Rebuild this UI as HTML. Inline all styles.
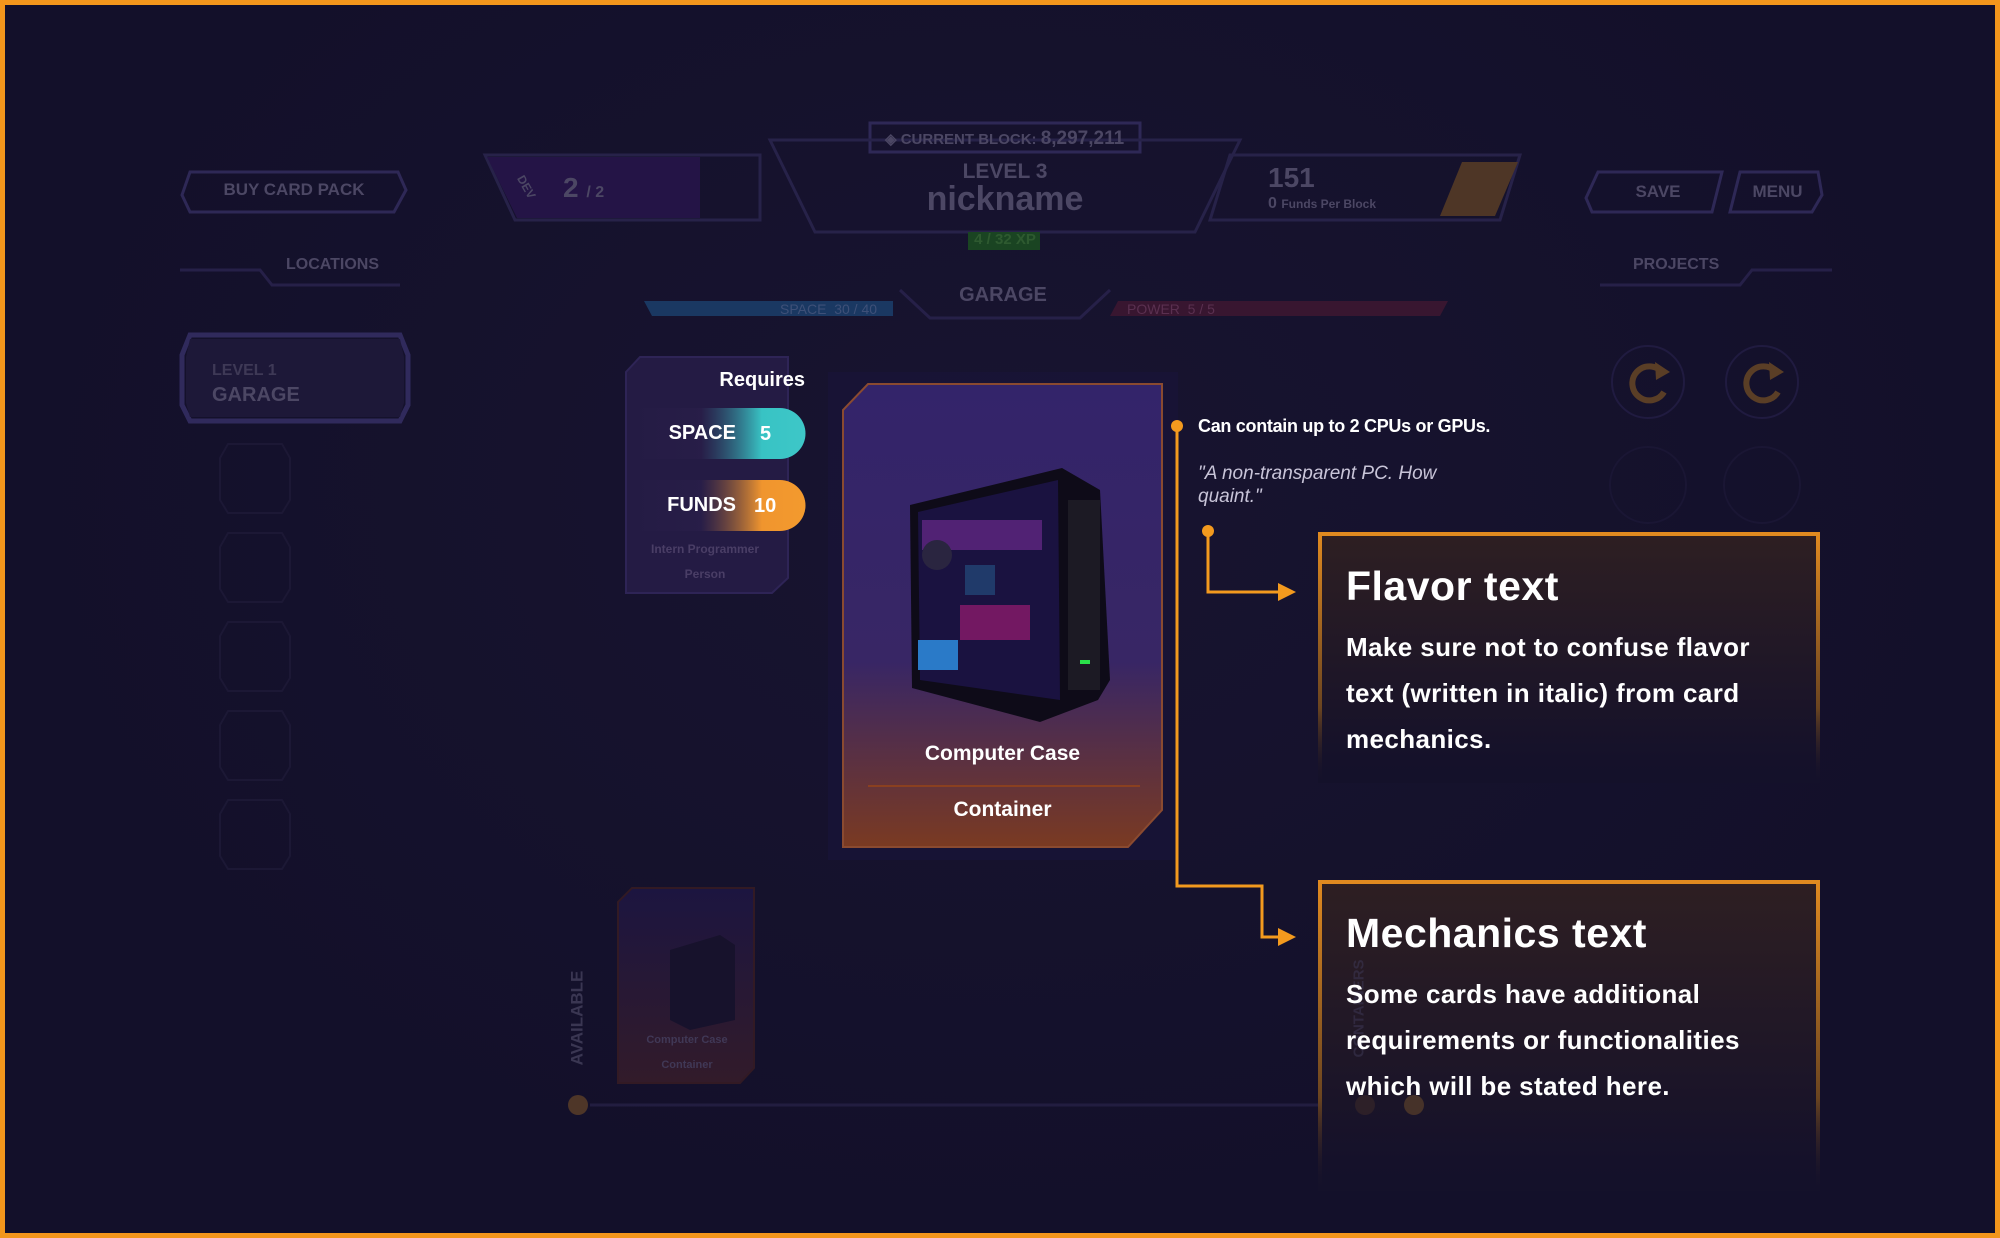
<!DOCTYPE html>
<html><head><meta charset="utf-8"><style>
*{margin:0;padding:0;box-sizing:border-box}
body{width:2000px;height:1238px;background:#14112a;overflow:hidden;position:relative;font-family:"Liberation Sans",sans-serif;font-weight:bold}
.a{position:absolute}
.dim{color:#4c4764}
.frame{position:absolute;left:0;top:0;width:2000px;height:1238px;border:5px solid #f3961c;pointer-events:none}
.t{color:#fff}
.nw{white-space:nowrap}
</style></head><body>
<div class="a" style="left:0;top:0;width:2000px;height:1238px;background:radial-gradient(ellipse at 50% 40%,#181430 0%,#13102a 70%)"></div>

<svg class="a" style="left:0;top:0" width="2000" height="1238">
<g fill="none" stroke="#2e2856" stroke-width="3">
<polygon points="190,172 398,172 406,190 394,212 190,212 182,195"/>
<polygon points="1598,172 1722,172 1712,212 1592,212 1586,198"/>
<polygon points="1740,172 1818,172 1822,195 1812,212 1730,212"/>
<polygon points="1230,155 1520,155 1500,220 1210,220" stroke="#272249"/>
<polygon points="485,155 760,155 760,220 515,220" stroke="#272249"/>
<polygon points="870,123 1140,123 1140,152 870,152"/>
<polygon points="770,140 1240,140 1195,232 815,232" stroke="#272249"/>
<polyline points="180,270 260,270 272,285 400,285" stroke="#262048"/>
<polyline points="1600,285 1740,285 1752,270 1832,270" stroke="#262048"/>
<polyline points="900,290 930,318 1080,318 1110,290" stroke="#262048"/>
<polygon points="190,335 400,335 408,355 408,405 400,421 190,421 182,405 182,355" stroke="#302a5c" stroke-width="5"/>
</g>
<polygon points="487,157 700,157 700,218 517,218" fill="#241446"/>
<polygon points="1462,162 1518,162 1495,216 1440,216" fill="#4e3626"/>
<polygon points="644,301 893,301 893,316 652,316" fill="#1a3862"/>
<polygon points="1118,301 1448,301 1440,316 1110,316" fill="#381630"/>
<rect x="968" y="232" width="72" height="18" fill="#1a4422"/>
<polygon points="190,339 400,339 404,357 404,403 400,417 190,417 186,403 186,357" fill="#1d1838"/>
<g fill="none" stroke="#1c1835" stroke-width="2">
<polygon points="228,444 282,444 290,458 290,500 282,513 228,513 220,500 220,458"/>
<polygon points="228,533 282,533 290,547 290,589 282,602 228,602 220,589 220,547"/>
<polygon points="228,622 282,622 290,636 290,678 282,691 228,691 220,678 220,636"/>
<polygon points="228,711 282,711 290,725 290,767 282,780 228,780 220,767 220,725"/>
<polygon points="228,800 282,800 290,814 290,856 282,869 228,869 220,856 220,814"/>
<circle cx="1648" cy="382" r="36" stroke="#201b40"/><circle cx="1762" cy="382" r="36" stroke="#201b40"/>
<circle cx="1648" cy="485" r="38" stroke="#1a1634"/><circle cx="1762" cy="485" r="38" stroke="#1a1634"/>
</g>
<g fill="none" stroke="#5a3e26" stroke-width="6">
<path d="M1662,372 A17,17 0 1 0 1664,392"/><path d="M1776,372 A17,17 0 1 0 1778,392"/>
</g>
<polygon points="1655,362 1670,372 1656,380" fill="#5a3e26"/><polygon points="1769,362 1784,372 1770,380" fill="#5a3e26"/>
<line x1="590" y1="1105" x2="1420" y2="1105" stroke="#221d40" stroke-width="3"/>
<circle cx="578" cy="1105" r="10" fill="#4e3628"/>
<defs>
<linearGradient id="sg" x1="0" y1="0" x2="0" y2="1"><stop offset="0" stop-color="#1c1540"/><stop offset="1" stop-color="#321b2a"/></linearGradient>
<linearGradient id="cg" x1="0" y1="0" x2="0" y2="1"><stop offset="0" stop-color="#33246a"/><stop offset="0.6" stop-color="#382665"/><stop offset="1" stop-color="#7a3a22"/></linearGradient>
<linearGradient id="sp" x1="0" y1="0" x2="1" y2="0"><stop offset="0" stop-color="#2a1f4a" stop-opacity="0"/><stop offset="0.4" stop-color="#2a1f4a" stop-opacity=".6"/><stop offset="0.75" stop-color="#38c3c4"/><stop offset="1" stop-color="#3ec7c8"/></linearGradient>
<linearGradient id="fp" x1="0" y1="0" x2="1" y2="0"><stop offset="0" stop-color="#2a1f4a" stop-opacity="0"/><stop offset="0.4" stop-color="#2a1f4a" stop-opacity=".6"/><stop offset="0.75" stop-color="#f0952e"/><stop offset="1" stop-color="#f39a2e"/></linearGradient>
<linearGradient id="bx" x1="0" y1="0" x2="0" y2="1"><stop offset="0" stop-color="#2e1f22"/><stop offset="0.9" stop-color="#15112a"/><stop offset="1" stop-color="#14112a"/></linearGradient>
<linearGradient id="bl" x1="0" y1="0" x2="0" y2="1"><stop offset="0" stop-color="#e08a20"/><stop offset="0.7" stop-color="#6a4420"/><stop offset="1" stop-color="#14112a" stop-opacity="0"/></linearGradient>
</defs>
<polygon points="640,357 788,357 788,578 772,593 626,593 626,372" fill="#241b44" stroke="#2e2456" stroke-width="2"/>
<polygon points="632,888 754,888 754,1068 740,1083 618,1083 618,902" fill="url(#sg)" stroke="#321a24" stroke-width="2"/>
<polygon points="670,950 720,935 735,945 735,1020 690,1030 670,1020" fill="#17122c"/>
<polygon points="828,372 1178,372 1178,860 828,860" fill="#19143a" opacity=".6"/>
<polygon points="868,384 1162,384 1162,810 1128,847 843,847 843,410" fill="url(#cg)" stroke="#8a4a30" stroke-width="2"/>
<line x1="868" y1="786" x2="1140" y2="786" stroke="#8a4020" stroke-width="2"/>
<polygon points="910,505 1062,468 1100,490 1110,680 1098,700 1040,722 912,688" fill="#0e0b18"/>
<polygon points="918,512 1058,480 1060,700 920,680" fill="#1a1240"/>
<rect x="922" y="520" width="120" height="30" fill="#6a2a8a" opacity=".7"/>
<circle cx="937" cy="555" r="15" fill="#2a2540"/>
<rect x="965" y="565" width="30" height="30" fill="#203a6a"/>
<rect x="960" y="605" width="70" height="35" fill="#8a1a6a" opacity=".8"/>
<rect x="918" y="640" width="40" height="30" fill="#2a7ac8"/>
<rect x="1068" y="500" width="32" height="190" fill="#1c1a24"/>
<rect x="1080" y="660" width="10" height="4" fill="#2ae04a"/>
<g stroke="#f39a1e" stroke-width="3" fill="none">
<polyline points="1177,426 1177,886 1262,886 1262,937 1280,937"/>
<polyline points="1208,531 1208,592 1280,592"/>
</g>
<circle cx="1177" cy="426" r="6" fill="#f39a1e"/><circle cx="1208" cy="531" r="6" fill="#f39a1e"/>
<polygon points="1278,583 1296,592 1278,601" fill="#f39a1e"/>
<polygon points="1278,928 1296,937 1278,946" fill="#f39a1e"/>
<rect x="1318" y="533" width="502" height="250" fill="url(#bx)"/>
<rect x="1318" y="881" width="502" height="310" fill="url(#bx)"/>
<rect x="1318" y="532" width="502" height="4" fill="#e08a20"/>
<rect x="1318" y="533" width="4" height="250" fill="url(#bl)"/><rect x="1816" y="533" width="4" height="250" fill="url(#bl)"/>
<rect x="1318" y="880" width="502" height="4" fill="#e08a20"/>
<rect x="1318" y="881" width="4" height="310" fill="url(#bl)"/><rect x="1816" y="881" width="4" height="310" fill="url(#bl)"/>
<circle cx="1365" cy="1105" r="10" fill="#3a2828" opacity=".6"/>
<circle cx="1414" cy="1105" r="10" fill="#5a3e2a" opacity=".7"/>
<path d="M631,408 H780 A25,25 0 0 1 780,459 H631 Z" fill="url(#sp)"/>
<path d="M631,480 H780 A25,25 0 0 1 780,531 H631 Z" fill="url(#fp)"/>
</svg>

<div class="a dim" style="left:182px;top:180px;width:224px;text-align:center;font-size:17px">BUY CARD PACK</div>
<div class="a dim" style="left:514px;top:180px;font-size:12px;transform:rotate(60deg)">DEV</div>
<div class="a dim" style="left:563px;top:172px;font-size:28px">2 <span style="font-size:16px">/ 2</span></div>
<div class="a dim nw" style="left:885px;top:128px;font-size:15px">◈ CURRENT BLOCK: <span style="font-size:19px">8,297,211</span></div>
<div class="a dim" style="left:900px;top:160px;width:210px;text-align:center;font-size:21px">LEVEL 3</div>
<div class="a dim" style="left:880px;top:180px;width:250px;text-align:center;font-size:34px">nickname</div>
<div class="a" style="left:960px;top:231px;width:90px;text-align:center;font-size:15px;color:#2e5a30">4 / 32 XP</div>
<div class="a dim" style="left:1268px;top:162px;font-size:28px">151</div>
<div class="a dim nw" style="left:1268px;top:195px;font-size:16px">0 <span style="font-size:12px">Funds Per Block</span></div>
<div class="a dim" style="left:1588px;top:182px;width:140px;text-align:center;font-size:17px">SAVE</div>
<div class="a dim" style="left:1731px;top:182px;width:93px;text-align:center;font-size:17px">MENU</div>
<div class="a dim" style="left:286px;top:256px;font-size:16px">LOCATIONS</div>
<div class="a dim" style="left:1633px;top:256px;font-size:16px">PROJECTS</div>
<div class="a dim" style="left:950px;top:284px;width:106px;text-align:center;font-size:20px">GARAGE</div>
<div class="a nw" style="left:780px;top:301px;font-size:14px;color:#3e5078;font-weight:normal">SPACE&nbsp; 30 / 40</div>
<div class="a nw" style="left:1127px;top:301px;font-size:14px;color:#5a3050;font-weight:normal">POWER&nbsp; 5 / 5</div>
<div class="a" style="left:212px;top:362px;font-size:16px;color:#3e3956">LEVEL 1</div>
<div class="a" style="left:212px;top:384px;font-size:20px;color:#4c4764">GARAGE</div>
<div class="a nw" style="left:530px;top:1008px;font-size:17px;color:#3a3652;transform:rotate(-90deg)">AVAILABLE</div>
<div class="a nw" style="left:1310px;top:1000px;font-size:15px;color:#3a3450;transform:rotate(-90deg);opacity:.6">CONTAINERS</div>

<div class="a" style="left:620px;top:542px;width:170px;text-align:center;font-size:12px;color:#4a3e66">Intern Programmer</div>
<div class="a" style="left:620px;top:567px;width:170px;text-align:center;font-size:12px;color:#4a3e66">Person</div>
<div class="a t" style="left:660px;top:369px;width:145px;text-align:right;font-size:20px">Requires</div>
<div class="a t" style="left:640px;top:422px;width:96px;text-align:right;font-size:20px">SPACE</div>
<div class="a t" style="left:760px;top:423px;font-size:20px">5</div>
<div class="a t" style="left:640px;top:494px;width:96px;text-align:right;font-size:20px">FUNDS</div>
<div class="a t" style="left:754px;top:495px;font-size:20px">10</div>

<div class="a" style="left:620px;top:1034px;width:134px;text-align:center;font-size:11px;color:#403856">Computer Case</div>
<div class="a" style="left:620px;top:1059px;width:134px;text-align:center;font-size:11px;color:#403856">Container</div>

<div class="a t" style="left:843px;top:742px;width:319px;text-align:center;font-size:21px">Computer Case</div>
<div class="a t" style="left:843px;top:798px;width:319px;text-align:center;font-size:21px">Container</div>

<div class="a t nw" style="left:1198px;top:416px;font-size:18px;letter-spacing:-0.3px">Can contain up to 2 CPUs or GPUs.</div>
<div class="a" style="left:1198px;top:462px;font-size:19px;font-style:italic;font-weight:normal;color:#c8c4d8;line-height:23px;width:260px">"A non-transparent PC. How quaint."</div>

<div class="a t nw" style="left:1346px;top:563px;font-size:41px;letter-spacing:0.5px">Flavor text</div>
<div class="a t nw" style="left:1346px;top:624px;font-size:26px;line-height:46px;letter-spacing:0.4px">Make sure not to confuse flavor<br>text (written in italic) from card<br>mechanics.</div>
<div class="a t nw" style="left:1346px;top:910px;font-size:41px;letter-spacing:0.5px">Mechanics text</div>
<div class="a t nw" style="left:1346px;top:971px;font-size:26px;line-height:46px;letter-spacing:0.4px">Some cards have additional<br>requirements or functionalities<br>which will be stated here.</div>

<div class="frame"></div>
</body></html>
